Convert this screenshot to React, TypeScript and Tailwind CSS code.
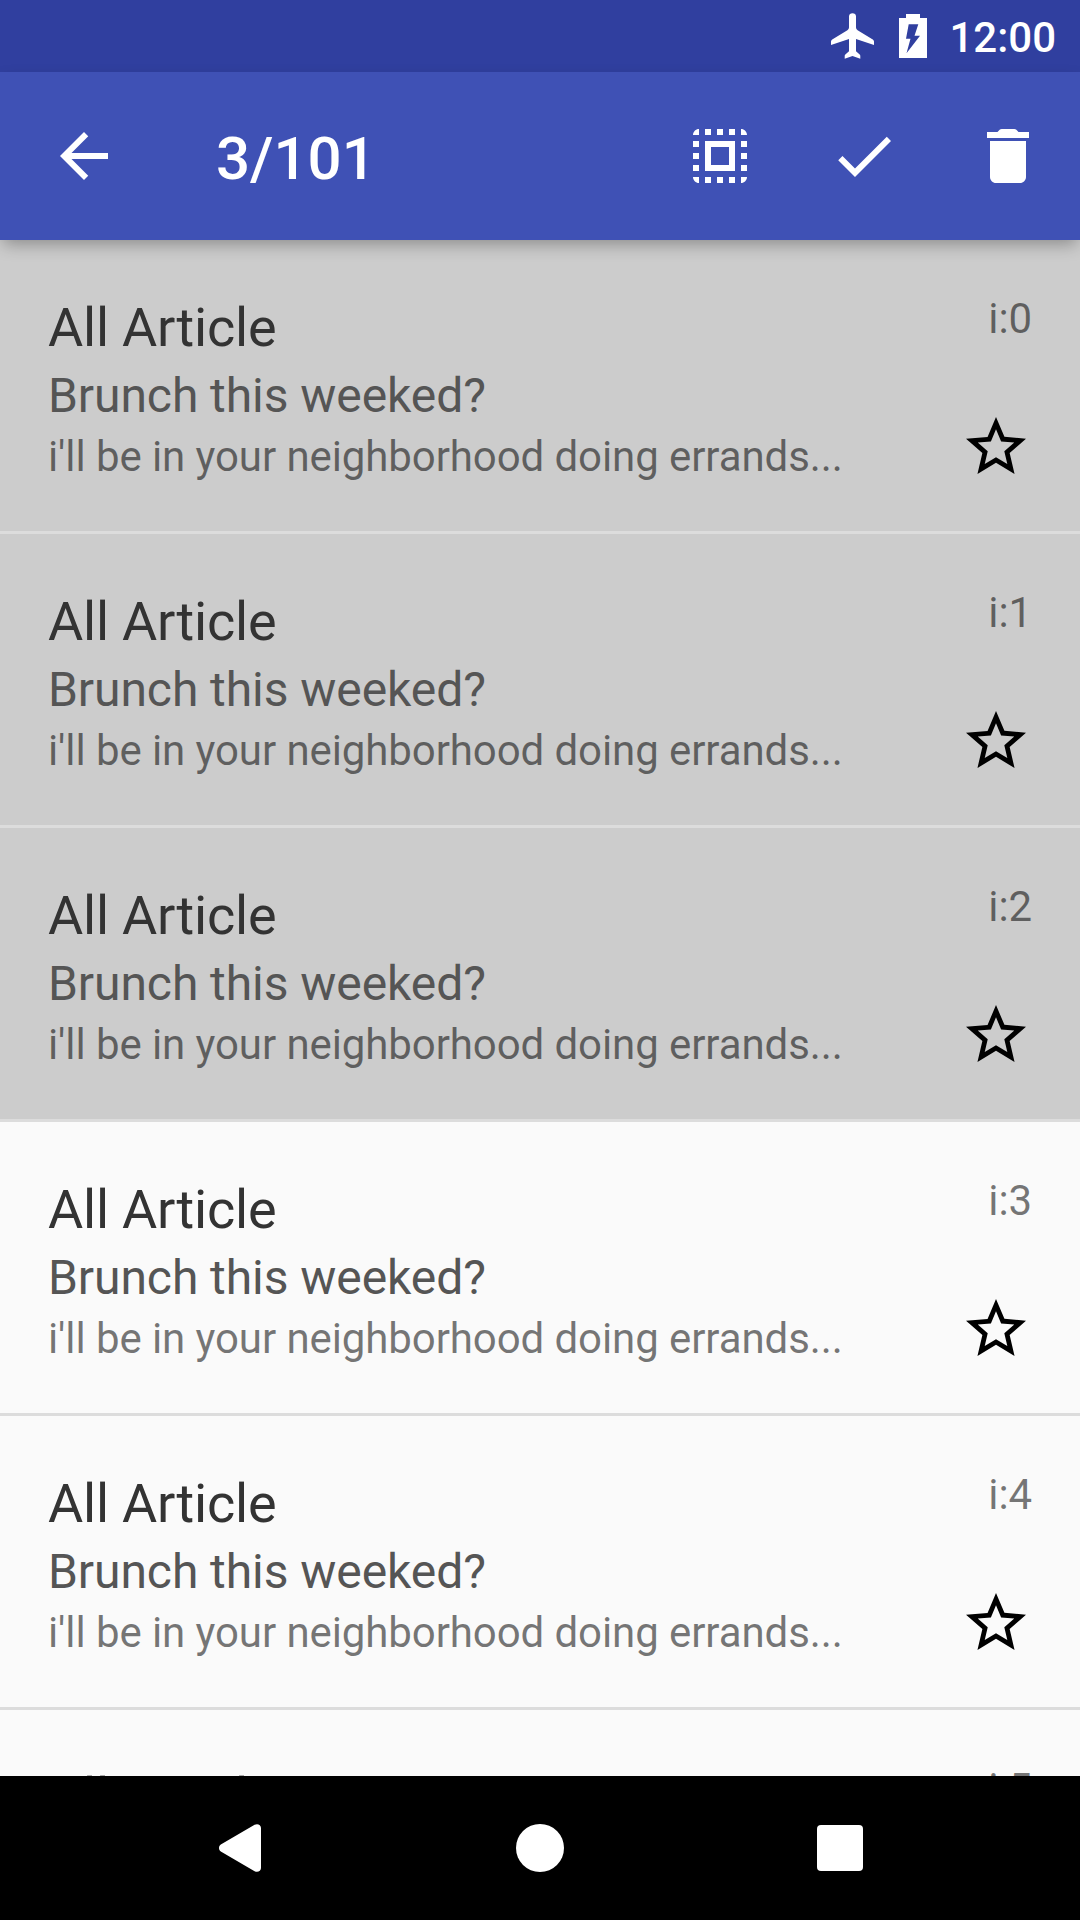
import React from "react";

const items = [0, 1, 2, 3, 4, 5].map((n) => ({ id: n, selected: n < 3 }));

function Icon({ d, className = "" }: { d: string; className?: string }) {
  return (
    <svg viewBox="0 0 24 24" className={"block size-[72px] shrink-0 " + className} fill="currentColor">
      <path d={d} />
    </svg>
  );
}

const BACK = "M20 11H7.83l5.59-5.59L12 4l-8 8 8 8 1.41-1.41L7.83 13H20v-2z";
const SELECT_ALL =
  "M3 5h2V3c-1.1 0-2 .9-2 2zm0 8h2v-2H3v2zm4 8h2v-2H7v2zM3 9h2V7H3v2zm10-6h-2v2h2V3zm6 0v2h2c0-1.1-.9-2-2-2zM5 21v-2H3c0 1.1.9 2 2 2zm-2-4h2v-2H3v2zM9 3H7v2h2V3zm2 18h2v-2h-2v2zm8-8h2v-2h-2v2zm0 8c1.1 0 2-.9 2-2h-2v2zm0-12h2V7h-2v2zm0 8h2v-2h-2v2zm-4 4h2v-2h-2v2zm0-16h2V3h-2v2zM7 17h10V7H7v10zm2-8h6v6H9V9z";
const CHECK = "M9 16.17L4.83 12l-1.42 1.41L9 19 21 7l-1.41-1.41z";
const TRASH =
  "M6 19c0 1.1.9 2 2 2h8c1.1 0 2-.9 2-2V7H6v12zM19 4h-3.5l-.71-.71c-.18-.18-.44-.29-.7-.29H9.91c-.26 0-.52.11-.7.29L8.5 4H5v2h14V4z";
const STAR =
  "M22 9.24l-7.19-.62L12 2 9.19 8.63 2 9.24l5.46 4.73L5.82 21 12 17.27 18.18 21l-1.63-7.03L22 9.24zM12 15.4l-3.76 2.27 1-4.28-3.32-2.88 4.38-.38L12 6.1l1.71 4.04 4.38.38-3.32 2.88 1 4.28L12 15.4z";

function StatusBar() {
  return (
    <div className="flex h-[72px] shrink-0 items-center justify-end bg-[#303f9f] pr-[24px] text-white">
      <svg viewBox="0 0 43 46" className="mr-[25px] block h-[46px] w-[43px]" fill="currentColor">
        <path d="M21.5 0.3C19.5 0.3 18 1.5 18 3.5V14.5Q18 16.3 16.4 17.3L1.2 26.6Q0 27.4 0 28.6V32L18 26V38.3L14.6 41.2Q13.6 42 13.7 43V45.7L21.5 43L29.3 45.7V43Q29.4 42 28.4 41.2L25 38.3V26L43 32V28.6Q43 27.4 41.8 26.6L26.6 17.3Q25 16.3 25 14.5V3.5C25 1.5 23.5 0.3 21.5 0.3Z" />
      </svg>
      <svg viewBox="0 0 28 44" className="mr-[22px] block h-[44px] w-[28px]" fill="currentColor" fillRule="evenodd">
        <path d="M7 0H21V4H28V44H0V4H7ZM9.7 10.3L7 24.7H11.5L7.5 39.3L21 21.7H15.5L19.3 10.3Z" />
      </svg>
      <span className="mt-[13px] self-start text-[42px] leading-[49px] font-medium">12:00</span>
    </div>
  );
}

function AppBar() {
  return (
    <div className="relative z-10 flex h-[168px] shrink-0 items-center bg-[#3f51b5] pr-9 pl-12 text-white shadow-[0_7px_16px_-3px_rgba(0,0,0,0.32)]">
      <Icon d={BACK} />
      <h1 className="mt-[51px] ml-24 flex-1 self-start text-[60px] leading-[71px] font-medium">3/101</h1>
      <div className="flex gap-[72px]">
        <Icon d={SELECT_ALL} />
        <Icon d={CHECK} />
        <Icon d={TRASH} />
      </div>
    </div>
  );
}

function Row({ id, selected }: { id: number; selected: boolean }) {
  return (
    <div
      className={
        "flex h-[294px] shrink-0 justify-between border-b-[3px] border-[#dcdcdc] px-12 " +
        (selected ? "bg-[#cccccc]" : "bg-[#fafafa]")
      }
    >
      <div className="flex flex-col pt-[56px] whitespace-nowrap">
        <div className="text-[54px] leading-[63px] tracking-[-0.2px] text-[#333333]">All Article</div>
        <div className="mt-2 text-[48px] leading-[57px] tracking-[-0.07px] text-[#555555]">Brunch this weeked?</div>
        <div className="mt-2 text-[42px] leading-[49px] tracking-[-0.09px] text-black/54">
          i'll be in your neighborhood doing errands...
        </div>
      </div>
      <div className="flex flex-col items-end pt-[54px]">
        <div className="h-[117px] text-[42px] leading-[49px] tracking-[-0.1px] text-black/54">i:{id}</div>
        <Icon d={STAR} className="text-black" />
      </div>
    </div>
  );
}

function NavBar() {
  return (
    <div className="flex h-[144px] shrink-0 items-center bg-black pl-[219px] text-white">
      <svg viewBox="0 0 42 48" className="block h-[48px] w-[42px]" fill="currentColor">
        <path d="M1.8 20.6L35.6 .8C38.5 -.9 42 .8 42 4V44C42 47.2 38.5 48.9 35.6 47.2L1.8 27.4C-.6 26 -.6 22 1.8 20.6Z" />
      </svg>
      <div className="ml-[255px] size-[48px] rounded-full bg-white" />
      <div className="ml-[253px] h-[46px] w-[46px] rounded-[4px] bg-white" />
    </div>
  );
}

export default function App() {
  return (
    <div className="flex h-[1920px] w-[1080px] flex-col overflow-hidden bg-[#fafafa] font-['Roboto',sans-serif]">
      <StatusBar />
      <AppBar />
      <div className="flex min-h-0 flex-1 flex-col overflow-hidden">
        {items.map((it) => (
          <Row key={it.id} {...it} />
        ))}
      </div>
      <NavBar />
    </div>
  );
}
